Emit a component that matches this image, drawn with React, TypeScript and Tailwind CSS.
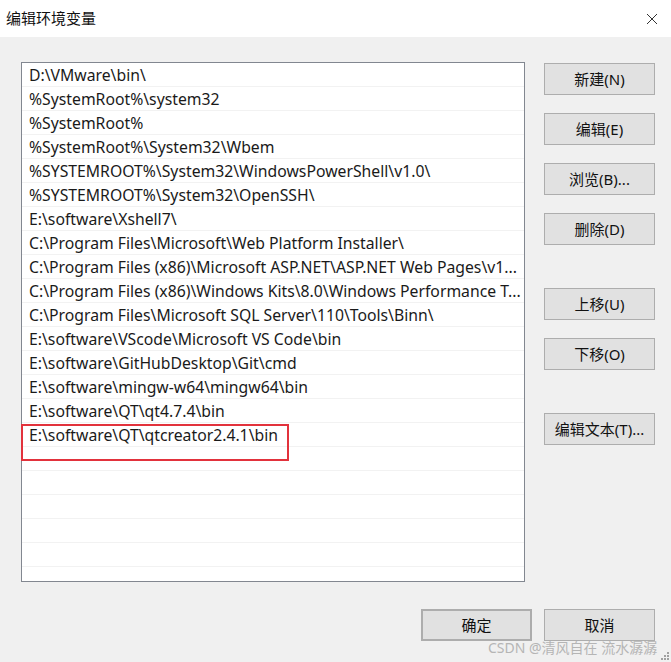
import React from 'react';

const paths = [
  'D:\\VMware\\bin\\',
  '%SystemRoot%\\system32',
  '%SystemRoot%',
  '%SystemRoot%\\System32\\Wbem',
  '%SYSTEMROOT%\\System32\\WindowsPowerShell\\v1.0\\',
  '%SYSTEMROOT%\\System32\\OpenSSH\\',
  'E:\\software\\Xshell7\\',
  'C:\\Program Files\\Microsoft\\Web Platform Installer\\',
  'C:\\Program Files (x86)\\Microsoft ASP.NET\\ASP.NET Web Pages\\v1...',
  'C:\\Program Files (x86)\\Windows Kits\\8.0\\Windows Performance T...',
  'C:\\Program Files\\Microsoft SQL Server\\110\\Tools\\Binn\\',
  'E:\\software\\VScode\\Microsoft VS Code\\bin',
  'E:\\software\\GitHubDesktop\\Git\\cmd',
  'E:\\software\\mingw-w64\\mingw64\\bin',
  'E:\\software\\QT\\qt4.7.4\\bin',
  'E:\\software\\QT\\qtcreator2.4.1\\bin',
];

const rows = [...paths, ...Array(6).fill('')];

const font = { fontFamily: '"Noto Sans", "Noto Sans CJK SC", sans-serif' };

const Btn = ({ label, className = '' }: { label: string; className?: string }) => (
  <button
    className={`w-[111px] h-[32px] bg-[#e1e1e1] border border-[#adadad] text-[15px] text-[#111] flex items-center justify-center ${className}`}
  >
    {label}
  </button>
);

const App = () => {
  return (
    <div
      className="relative w-[671px] h-[662px] bg-[#f0f0f0] flex flex-col overflow-hidden"
      style={font}
    >
      {/* title bar */}
      <div className="h-[37px] bg-white flex items-center justify-between pl-[6px] pr-[13px]">
        <span className="text-[15px] text-[#111]">编辑环境变量</span>
        <svg width="12" height="12" viewBox="0 0 12 12">
          <path d="M1 1 L11 11 M11 1 L1 11" stroke="#333" strokeWidth="1" fill="none" />
        </svg>
      </div>

      <div className="flex pt-[25px] pl-[21px]">
        {/* list */}
        <div className="w-[504px] h-[520px] bg-white border border-[#828790] overflow-hidden">
          {rows.map((p, i) => (
            <div
              key={i}
              className="h-[24px] border-b border-[#f2f2f2] pl-[7px] pt-[3px] flex items-center text-[15.75px] text-[#1a1a1a] whitespace-nowrap"
            >
              {p}
            </div>
          ))}
        </div>

        {/* side buttons */}
        <div className="ml-[19px] pt-[1px] flex flex-col">
          <Btn label="新建(N)" />
          <Btn label="编辑(E)" className="mt-[18px]" />
          <Btn label="浏览(B)..." className="mt-[18px]" />
          <Btn label="删除(D)" className="mt-[18px]" />
          <Btn label="上移(U)" className="mt-[43px]" />
          <Btn label="下移(O)" className="mt-[18px]" />
          <Btn label="编辑文本(T)..." className="mt-[43px]" />
        </div>
      </div>

      {/* bottom buttons */}
      <div className="flex justify-end gap-[12px] pr-[16px] mt-[27px]">
        <Btn label="确定" className="border-2 border-[#0078d7]" />
        <Btn label="取消" />
      </div>

      {/* annotation */}
      <div className="absolute left-[21px] top-[424px] w-[268px] h-[37px] border-2 border-[#e2323c]" />

      {/* watermark */}
      <div className="absolute left-[488px] top-[637px] text-[14px] text-[#b5b5b5] whitespace-nowrap">
        CSDN @清风自在 流水潺潺
      </div>
      <div className="absolute right-[2px] bottom-[2px] grid grid-cols-3 gap-[1px]">
        {[0, 0, 1, 0, 1, 1, 1, 1, 1].map((v, i) => (
          <div key={i} className={`w-[2px] h-[2px] ${v ? 'bg-[#a0a0a0]' : ''}`} />
        ))}
      </div>
    </div>
  );
};

export default App;
